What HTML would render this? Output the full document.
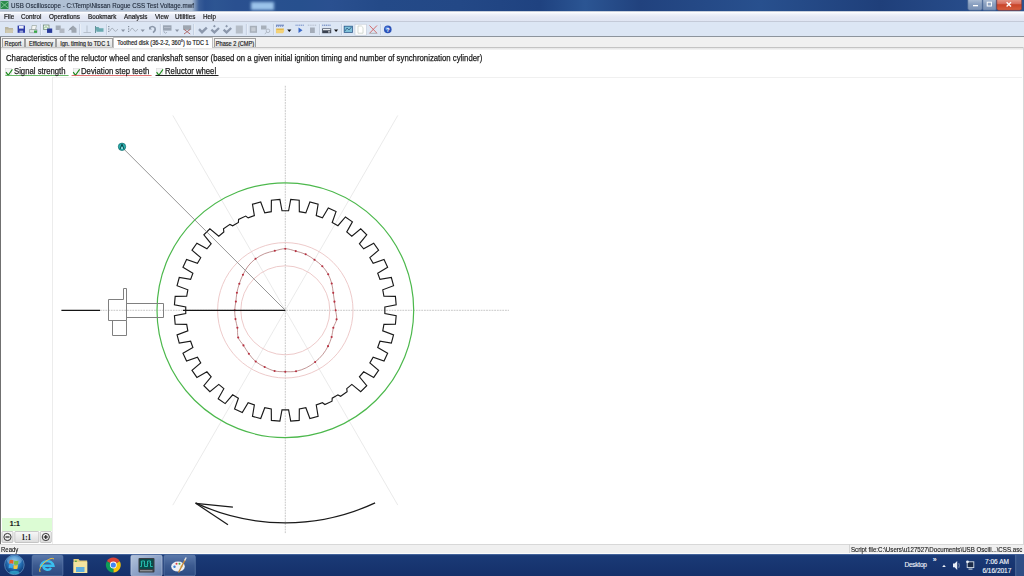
<!DOCTYPE html>
<html><head><meta charset="utf-8">
<style>
*{margin:0;padding:0;box-sizing:border-box}
html,body{width:1024px;height:576px;overflow:hidden;background:#fff;font-family:"Liberation Sans",sans-serif;color:#222}
.a,span{-webkit-text-stroke:0.15px currentColor}
.tab{-webkit-text-stroke:0.18px #1a1a1a}
.a{position:absolute}
#title{left:0;top:0;width:1024px;height:11px;background:linear-gradient(90deg,#b4c4d6 0px,#a8bad0 192px,#3a5e98 199px,#2a5090 205px,#2d5592 215px,#2a5090 235px,#27508e 300px,#2a5090 330px,#244a88 380px,#234886 460px,#1f4280 540px,#2b5593 585px,#21427e 640px,#28508e 760px,#1f3f7a 880px,#2a5190 1000px)}
#blob{left:251px;top:2px;width:23px;height:8px;background:#a8d0f4;filter:blur(1.4px);opacity:0.9}
#title span{position:absolute;left:11px;top:1.6px;font-size:6.9px;color:#1e2838;white-space:nowrap;-webkit-text-stroke:0.12px #1e2838;transform:scaleX(0.905);transform-origin:0 0}
#menu{left:0;top:11px;width:1024px;height:10.8px;background:linear-gradient(#a8b4c8 0,#fdfdff 1.4px,#eef1f9 3px,#e4e8f4 6px,#e0e5f2 100%);border-bottom:0.8px solid #c4cad8}
#menu span{position:absolute;top:2.4px;font-size:7px;color:#1a1a1a;-webkit-text-stroke:0.2px #1a1a1a;white-space:nowrap;transform:scaleX(0.9);transform-origin:0 0}
#tool{left:0;top:22px;width:1024px;height:15px;background:#dce6f4;border-bottom:1px solid #8d949c}
#tabs{left:0;top:37px;width:1024px;height:11px;background:#f0f0f0}
.tab{height:9.5px;background:linear-gradient(#f6f6f6,#dcdcdc);border:0.6px solid #a0a0a0;border-bottom:none;font-size:7px;color:#1a1a1a;white-space:nowrap;text-align:center;line-height:9px;overflow:visible}
.tab i{font-style:normal;position:absolute;left:50%;top:0;transform:translateX(-50%) scaleX(0.8);transform-origin:50% 50%}
.act{height:11px;background:#fff;border-color:#c0c0c0;line-height:9px;z-index:2}
#content{left:0;top:47.2px;width:1024px;height:497px;background:linear-gradient(#c4c4c4 0,#c4c4c4 1px,#e4e4e4 1px,#f0f0f0 2.4px,#fff 3.4px);border-right:1.2px solid #d8d8d8}
#lborder{left:0;top:36.5px;width:1.1px;height:507px;background:#707070}
#status{left:0;top:543.6px;width:1024px;height:11px;background:linear-gradient(#d8d8d8 0,#d8d8d8 0.8px,#f0f0f0 0.8px,#f0f0f0 9.4px,#fbfbfb 9.4px)}
#status span{position:absolute;top:1.2px;font-size:7.2px;color:#222;white-space:nowrap;transform:scaleX(0.83);transform-origin:0 0}
#task{left:0;top:554px;width:1024px;height:22px;background:linear-gradient(#1d3c78,#18346c 50%,#17336b)}
.cb{position:absolute;top:65.8px;color:#1a1a1a;-webkit-text-stroke:0.25px #1a1a1a;height:12px;font-size:9.1px;white-space:nowrap;transform:scaleX(0.85);transform-origin:0 0}
</style></head><body>
<div class="a" id="title"><div class="a" id="blob"></div><span>USB Oscilloscope - C:\Temp\Nissan Rogue CSS Test Voltage.mwf</span>
<svg class="a" style="left:0;top:0" width="9" height="10"><rect x="0.5" y="1" width="8" height="8" fill="#2c8a4c"/><path d="M1,2 L8,8 M8,2 L1,8" stroke="#8fd0a0" stroke-width="0.8"/></svg>
<svg class="a" style="left:966px;top:0" width="58" height="11">
<defs><linearGradient id="wb" x1="0" y1="0" x2="0" y2="1"><stop offset="0" stop-color="#b8c8dc"/><stop offset="0.5" stop-color="#8aa0c0"/><stop offset="1" stop-color="#7890b4"/></linearGradient>
<linearGradient id="wc" x1="0" y1="0" x2="0" y2="1"><stop offset="0" stop-color="#e8a898"/><stop offset="0.45" stop-color="#d87060"/><stop offset="0.55" stop-color="#c84428"/><stop offset="1" stop-color="#d86040"/></linearGradient></defs>
<rect x="1.8" y="-2" width="14.5" height="12.3" rx="2" fill="url(#wb)" stroke="#4a6490" stroke-width="0.6"/>
<rect x="16.8" y="-2" width="13.4" height="12.3" rx="1" fill="url(#wb)" stroke="#4a6490" stroke-width="0.6"/>
<rect x="30.8" y="-2" width="24.8" height="12.3" rx="2" fill="url(#wc)" stroke="#8a3a32" stroke-width="0.6"/>
<rect x="7" y="5" width="5" height="1.3" fill="#fff"/>
<rect x="21.2" y="2.2" width="4.2" height="3.8" fill="none" stroke="#fff" stroke-width="1"/>
<path d="M40.6,2.2 L45,6.4 M45,2.2 L40.6,6.4" stroke="#fff" stroke-width="1.4"/>
</svg>
</div>
<div class="a" id="menu">
<span style="left:3.6px">File</span><span style="left:20.6px">Control</span><span style="left:49.3px">Operations</span><span style="left:87.5px">Bookmark</span><span style="left:124px">Analysis</span><span style="left:154.6px">View</span><span style="left:175.2px">Utilities</span><span style="left:203.2px">Help</span>
</div>
<div class="a" id="tool"></div>
<svg class="a" style="left:0;top:0" width="400" height="40"><path d="M5,27 h3 l1,1 h4 v5 h-8z" fill="#b8b4a0"/><path d="M5.5,29.5 h8 l-1,3.5 h-7z" fill="#cfc9b0"/><rect x="17.6" y="25.6" width="7.4" height="7.2" fill="#2c3aa8"/><rect x="19" y="26" width="4.6" height="2.6" fill="#e8ecf8"/><rect x="19.5" y="30.6" width="3.6" height="2.2" fill="#9aa4d8"/><path d="M29.5,29.5 h7.5 v3.2 h-7.5z" fill="#dde2e6" stroke="#8c969c" stroke-width="0.6"/><path d="M32,25.5 l4.5,0 l-1,4 h-4z" fill="#f4f6f4" stroke="#7c8a80" stroke-width="0.5"/><rect x="34" y="30.5" width="3" height="2.3" fill="#3aa848"/><line x1="40.5" y1="24" x2="40.5" y2="35" stroke="#b6c2d4" stroke-width="0.8"/><line x1="41.3" y1="24" x2="41.3" y2="35" stroke="#f6f9fd" stroke-width="0.6"/><rect x="43.5" y="25" width="5.5" height="4.5" fill="#eaf2ea" stroke="#5a7a5a" stroke-width="0.6"/><rect x="47" y="28.5" width="5.2" height="4.4" fill="#2a3c9c"/><path d="M44,28.5 l2,-2 l2,2" stroke="#5aa85a" stroke-width="0.7" fill="none"/><rect x="55.7" y="25.5" width="5" height="4.5" fill="#a4acb6"/><rect x="59.5" y="28.5" width="5" height="4.5" fill="#b2b8c2"/><path d="M69,29 l4,-3.5 l3.5,3 v4.2 h-5 v-2.5 z" fill="#9ea6b0"/><path d="M68.8,30.5 l3,-3" stroke="#8890a0" stroke-width="1"/><line x1="79.6" y1="24" x2="79.6" y2="35" stroke="#b6c2d4" stroke-width="0.8"/><line x1="80.39999999999999" y1="24" x2="80.39999999999999" y2="35" stroke="#f6f9fd" stroke-width="0.6"/><path d="M87,25.5 v6.8 M83.5,32.5 h7.5" stroke="#a8b0bc" stroke-width="0.7" fill="none"/><path d="M95.5,27 h3 l1,1.2 h4 v3.6 h-7z" fill="#6aaab0"/><rect x="95" y="26" width="0.9" height="7" fill="#5a8890"/><line x1="106.8" y1="24" x2="106.8" y2="35" stroke="#b6c2d4" stroke-width="0.8"/><line x1="107.6" y1="24" x2="107.6" y2="35" stroke="#f6f9fd" stroke-width="0.6"/><path d="M108.8,26 v1.2 M108.8,28.4 v1.2 M108.8,30.8 v1.2" stroke="#707a88" stroke-width="1"/><path d="M110,31 q2,-5 4,-1 q1.5,3 3.8,-1" stroke="#a0a8b4" stroke-width="0.8" fill="none"/><path d="M121,29.5 h4.2 l-2.1,2.4z" fill="#8a94a4"/><path d="M128.7,26 v1.2 M128.7,28.4 v1.2 M128.7,30.8 v1.2" stroke="#707a88" stroke-width="1"/><path d="M130,31 q2,-5 4,-1 q1.5,3 3.8,-1" stroke="#a0a8b4" stroke-width="0.8" fill="none"/><path d="M140.6,29.5 h4.2 l-2.1,2.4z" fill="#8a94a4"/><path d="M149.5,28 q3,-3 5.5,0 q1,2.5 -2,4.6" stroke="#8c98aa" stroke-width="1.6" fill="none"/><path d="M149,26.5 v3 h3z" fill="#8c98aa"/><line x1="160.4" y1="24" x2="160.4" y2="35" stroke="#b6c2d4" stroke-width="0.8"/><line x1="161.20000000000002" y1="24" x2="161.20000000000002" y2="35" stroke="#f6f9fd" stroke-width="0.6"/><rect x="163" y="25.3" width="8.5" height="5.3" fill="#9aa4b2"/><rect x="164" y="27.2" width="6.5" height="0.7" fill="#c0c8d4"/><path d="M164,31 v1.2 l1.5,1 l1.5,-1" stroke="#8c96a4" stroke-width="0.6" fill="none"/><path d="M175,29.5 h4.2 l-2.1,2.4z" fill="#8a94a4"/><rect x="183" y="25.3" width="8.2" height="4.6" fill="#9ea6b0"/><path d="M184,34 l6.2,-4.6 M184,29.4 l6.2,4.6" stroke="#b07070" stroke-width="1" fill="none"/><line x1="193.8" y1="24" x2="193.8" y2="35" stroke="#b6c2d4" stroke-width="0.8"/><line x1="194.60000000000002" y1="24" x2="194.60000000000002" y2="35" stroke="#f6f9fd" stroke-width="0.6"/><path d="M199,29.2 l3,3 l4.8,-4.6" stroke="#8c98ac" stroke-width="2.4" fill="none"/><path d="M211.4,29.6 l3,2.8 l4.6,-4.4" stroke="#8c98ac" stroke-width="2.3" fill="none"/><path d="M214.4,24.8 l1.4,1.4 l-1.4,1.4 l-1.4,-1.4z" fill="#8c98ac"/><path d="M223.6,29.6 l3,2.8 l4.6,-4.4" stroke="#8c98ac" stroke-width="2.3" fill="none"/><path d="M226.6,24.8 l1.4,1.4 l-1.4,1.4 l-1.4,-1.4z" fill="#8c98ac"/><rect x="235.8" y="25.5" width="7" height="8" fill="#b6bec8"/><line x1="246.4" y1="24" x2="246.4" y2="35" stroke="#b6c2d4" stroke-width="0.8"/><line x1="247.20000000000002" y1="24" x2="247.20000000000002" y2="35" stroke="#f6f9fd" stroke-width="0.6"/><rect x="249.8" y="25.8" width="7.2" height="7" fill="#a8b0ba"/><rect x="251.3" y="27.3" width="4.2" height="4" fill="#c6ccd4"/><rect x="261" y="25.5" width="5.5" height="4" fill="#a8b0ba"/><circle cx="268" cy="30.8" r="1.8" fill="none" stroke="#a0a8b2" stroke-width="0.7"/><path d="M266.6,32.3 l-1.8,1.5" stroke="#a0a8b2" stroke-width="0.8"/><line x1="273.8" y1="24" x2="273.8" y2="35" stroke="#b6c2d4" stroke-width="0.8"/><line x1="274.6" y1="24" x2="274.6" y2="35" stroke="#f6f9fd" stroke-width="0.6"/><path d="M276,25.2 h8 M276,26.3 h1.2 m1,0 h1 m1,0 h1 m1,0 h1" stroke="#3050a0" stroke-width="0.7"/><path d="M276.2,28.5 h7.8 l-1,4.6 h-6.8z" fill="#e4b848"/><path d="M276.2,30 h8.2 l-1.3,3.2 h-6.9z" fill="#f4d276"/><path d="M287.2,29.5 h4.2 l-2.1,2.4z" fill="#111"/><path d="M295.5,25.2 h8.8" stroke="#5070b8" stroke-width="0.8" stroke-dasharray="1.2,0.6"/><path d="M298.5,27.5 l4,2.8 l-4,2.8z" fill="#3a68c8"/><path d="M307.8,25.2 h8.5" stroke="#a8b0c0" stroke-width="0.8" stroke-dasharray="1.2,0.6"/><rect x="310" y="27.5" width="4.8" height="5.5" fill="#a4acb8"/><line x1="319.5" y1="24" x2="319.5" y2="35" stroke="#b6c2d4" stroke-width="0.8"/><line x1="320.3" y1="24" x2="320.3" y2="35" stroke="#f6f9fd" stroke-width="0.6"/><path d="M322.2,25.2 h9" stroke="#3a5aa8" stroke-width="0.8" stroke-dasharray="1.2,0.6"/><rect x="322.2" y="28.4" width="9" height="4.8" fill="#3a4250"/><rect x="323" y="29" width="7.4" height="1.3" fill="#e8ecf0"/><rect x="328" y="31.3" width="2.2" height="1.2" fill="#d0d4da"/><path d="M334,29.5 h4.2 l-2.1,2.4z" fill="#111"/><line x1="341.6" y1="24" x2="341.6" y2="35" stroke="#b6c2d4" stroke-width="0.8"/><line x1="342.40000000000003" y1="24" x2="342.40000000000003" y2="35" stroke="#f6f9fd" stroke-width="0.6"/><rect x="343.8" y="25.8" width="9" height="7" fill="#2c5a8c"/><rect x="344.6" y="26.6" width="7.4" height="5.4" fill="#7ec0d8"/><path d="M345,31 l2,-3 l2,2 l2.5,-3" stroke="#1a3a6a" stroke-width="0.6" fill="none"/><rect x="355" y="24.2" width="11.3" height="11" fill="#fbfcfd" stroke="#c4ccd8" stroke-width="0.6"/><path d="M358,26 h3.4 l1.6,1.6 v5.6 h-5z" fill="#fff" stroke="#a8b4a8" stroke-width="0.5"/><path d="M369.5,25.5 l7.5,7.8 M377,25.5 l-7.5,7.8" stroke="#d06060" stroke-width="0.9"/><path d="M369.5,33.3 h7.5" stroke="#909090" stroke-width="0.6"/><line x1="380.8" y1="24" x2="380.8" y2="35" stroke="#b6c2d4" stroke-width="0.8"/><line x1="381.6" y1="24" x2="381.6" y2="35" stroke="#f6f9fd" stroke-width="0.6"/><circle cx="387.8" cy="29.4" r="3.8" fill="#2a52b8"/><circle cx="387.2" cy="28.6" r="2" fill="#5a86e0"/><text x="387.8" y="31.8" font-family="Liberation Sans" font-weight="bold" font-size="6" fill="#fff" text-anchor="middle">?</text></svg>
<div class="a" id="tabs"></div>
<div class="a tab" style="left:1.8px;top:38px;width:23.2px"><i>Report</i></div>
<div class="a tab" style="left:25.3px;top:38px;width:30.9px"><i>Efficiency</i></div>
<div class="a tab" style="left:56.4px;top:38px;width:56.3px"><i>Ign. timing to TDC 1</i></div>
<div class="a tab act" style="left:112.6px;top:37px;width:100.8px"><i>Toothed disk (36-2-2, 360°) to TDC 1</i></div>
<div class="a tab" style="left:213.6px;top:38.2px;width:42px"><i>Phase 2 (CMP)</i></div>
<div class="a" id="content"></div>
<div class="a" id="lborder"></div>
<div class="a" style="left:5.5px;top:52.5px;font-size:9.2px;color:#1a1a1a;white-space:nowrap;transform:scaleX(0.847);-webkit-text-stroke:0.25px #1a1a1a;transform-origin:0 0">Characteristics of the reluctor wheel and crankshaft sensor (based on a given initial ignition timing and number of synchronization cylinder)</div>

<svg class="a" style="left:0;top:64px" width="230" height="14">
<rect x="5.5" y="4.5" width="6" height="6" fill="#f4f4f4" stroke="#d8d8d8" stroke-width="0.6"/>
<rect x="73.5" y="4.5" width="6" height="6" fill="#f4f4f4" stroke="#d8d8d8" stroke-width="0.6"/>
<rect x="156.5" y="4.5" width="6" height="6" fill="#f4f4f4" stroke="#d8d8d8" stroke-width="0.6"/>
<path d="M6,8.2 L8.2,11.2 L12.4,5.4" fill="none" stroke="#1a8a1a" stroke-width="1.1"/>
<path d="M73.2,8.2 L75.4,11.2 L79.6,5.4" fill="none" stroke="#1a8a1a" stroke-width="1.1"/>
<path d="M156.6,8.2 L158.8,11.2 L163,5.4" fill="none" stroke="#1a8a1a" stroke-width="1.1"/>
<line x1="5.3" y1="11.5" x2="68.6" y2="11.5" stroke="#58b058" stroke-width="0.9"/>
<line x1="71.6" y1="11.5" x2="151.6" y2="11.5" stroke="#d86060" stroke-width="0.9"/>
<line x1="155.5" y1="11.5" x2="218.5" y2="11.5" stroke="#202020" stroke-width="1"/>
</svg>
<div class="cb" style="left:14.4px">Signal strength</div>
<div class="cb" style="left:81.2px">Deviation step teeth</div>
<div class="cb" style="left:164.6px">Reluctor wheel</div>

<div class="a" style="left:52px;top:76.6px;width:970px;height:0.8px;background:#f0f0f0"></div>
<div class="a" style="left:51.5px;top:77px;width:1px;height:467px;background:#ececec"></div>
<svg width="1024" height="576" viewBox="0 0 1024 576" style="position:absolute;left:0;top:0">
<g stroke="#e8e8e8" stroke-width="0.9" fill="none">
<line x1="285.3" y1="310.3" x2="397.80" y2="115.44"/>
<line x1="285.3" y1="310.3" x2="172.80" y2="115.44"/>
<line x1="285.3" y1="310.3" x2="172.80" y2="505.16"/>
<line x1="285.3" y1="310.3" x2="397.80" y2="505.16"/>
</g>
<g stroke="#b4b4b4" stroke-width="0.75" fill="none" stroke-dasharray="1.8,0.9">
<line x1="285.3" y1="85.8" x2="285.3" y2="533.5"/>
<line x1="100" y1="310.3" x2="509" y2="310.3"/>
</g>
<circle cx="285.3" cy="310.3" r="67.7" fill="none" stroke="#ebc4c4" stroke-width="0.9"/>
<circle cx="285.3" cy="310.3" r="44.5" fill="none" stroke="#ebc4c4" stroke-width="0.9"/>
<ellipse cx="285.35" cy="310.2" rx="128.35" ry="127.4" fill="none" stroke="#4cb84c" stroke-width="1.2"/>
<path d="M335.60,310.30 C335.24,307.35 334.84,304.54 334.44,301.63 C334.05,298.73 333.68,295.88 333.22,292.86 C332.77,289.83 332.56,286.59 331.72,283.50 C330.88,280.41 329.76,277.19 328.20,274.30 C326.63,271.42 324.61,268.61 322.32,266.18 C320.04,263.75 317.27,261.70 314.50,259.72 C311.73,257.74 308.81,255.73 305.68,254.29 C302.56,252.86 299.13,252.05 295.74,251.11 C292.34,250.18 288.79,248.75 285.30,248.70 C281.81,248.65 278.25,249.99 274.81,250.82 C271.37,251.64 267.89,252.31 264.68,253.64 C261.47,254.96 258.30,256.71 255.55,258.77 C252.80,260.84 250.25,263.36 248.15,266.02 C246.04,268.69 244.41,271.80 242.94,274.75 C241.47,277.71 240.32,280.76 239.31,283.75 C238.31,286.74 237.48,289.71 236.91,292.69 C236.33,295.66 236.23,298.65 235.86,301.58 C235.50,304.52 234.77,307.38 234.70,310.30 C234.63,313.22 235.02,316.18 235.47,319.09 C235.91,321.99 236.92,324.67 237.38,327.74 C237.83,330.81 237.17,334.56 238.19,337.50 C239.20,340.44 241.70,342.69 243.47,345.40 C245.25,348.10 246.82,351.04 248.85,353.73 C250.89,356.43 253.06,359.36 255.70,361.57 C258.34,363.77 261.53,365.40 264.68,366.96 C267.83,368.53 271.17,370.17 274.60,370.96 C278.04,371.75 281.73,371.65 285.30,371.70 C288.87,371.75 292.56,371.91 296.05,371.26 C299.54,370.61 303.05,369.35 306.23,367.81 C309.42,366.27 312.42,364.18 315.15,362.00 C317.88,359.82 320.43,357.37 322.58,354.73 C324.73,352.09 326.54,349.11 328.05,346.17 C329.55,343.22 330.75,340.12 331.63,337.05 C332.51,333.98 332.49,330.73 333.32,327.78 C334.15,324.83 336.23,322.26 336.61,319.35 C336.99,316.43 335.96,313.25 335.60,310.30" fill="none" stroke="#a86868" stroke-width="0.7"/>
<g fill="#b83040"><circle cx="335.60" cy="310.30" r="1.05"/><circle cx="334.44" cy="301.63" r="1.05"/><circle cx="333.22" cy="292.86" r="1.05"/><circle cx="331.72" cy="283.50" r="1.05"/><circle cx="328.20" cy="274.30" r="1.05"/><circle cx="322.32" cy="266.18" r="1.05"/><circle cx="314.50" cy="259.72" r="1.05"/><circle cx="305.68" cy="254.29" r="1.05"/><circle cx="295.74" cy="251.11" r="1.05"/><circle cx="285.30" cy="248.70" r="1.05"/><circle cx="274.81" cy="250.82" r="1.05"/><circle cx="255.55" cy="258.77" r="1.05"/><circle cx="242.94" cy="274.75" r="1.05"/><circle cx="239.31" cy="283.75" r="1.05"/><circle cx="236.91" cy="292.69" r="1.05"/><circle cx="235.86" cy="301.58" r="1.05"/><circle cx="234.70" cy="310.30" r="1.05"/><circle cx="235.47" cy="319.09" r="1.05"/><circle cx="237.38" cy="327.74" r="1.05"/><circle cx="238.19" cy="337.50" r="1.05"/><circle cx="243.47" cy="345.40" r="1.05"/><circle cx="248.85" cy="353.73" r="1.05"/><circle cx="255.70" cy="361.57" r="1.05"/><circle cx="264.68" cy="366.96" r="1.05"/><circle cx="274.60" cy="370.96" r="1.05"/><circle cx="285.30" cy="371.70" r="1.05"/><circle cx="296.05" cy="371.26" r="1.05"/><circle cx="315.15" cy="362.00" r="1.05"/><circle cx="328.05" cy="346.17" r="1.05"/><circle cx="331.63" cy="337.05" r="1.05"/><circle cx="333.32" cy="327.78" r="1.05"/><circle cx="336.61" cy="319.35" r="1.05"/></g>
<polygon points="384.85,307.00 396.17,304.88 395.42,296.39 383.91,296.27 382.76,289.76 393.54,285.71 391.34,277.48 379.97,279.36 377.71,273.15 387.63,267.29 384.03,259.56 373.16,263.39 369.86,257.67 378.60,250.17 373.71,243.19 363.68,248.84 359.43,243.78 366.74,234.88 360.72,228.86 351.82,236.17 346.76,231.92 352.41,221.89 345.43,217.00 337.93,225.74 332.21,222.44 336.04,211.57 328.31,207.97 322.45,217.89 316.24,215.63 318.12,204.26 309.89,202.06 305.84,212.84 299.33,211.69 299.21,200.18 290.72,199.43 288.60,210.75 282.00,210.75 279.88,199.43 271.39,200.18 271.27,211.69 264.76,212.84 260.71,202.06 252.48,204.26 254.36,215.63 248.15,217.89 245.70,216.09 238.58,219.40 238.39,222.44 232.67,225.74 229.94,224.39 223.51,228.89 223.84,231.92 218.78,236.17 209.88,228.86 203.86,234.88 211.17,243.78 206.92,248.84 196.89,243.19 192.00,250.17 200.74,257.67 197.44,263.39 186.57,259.56 182.97,267.29 192.89,273.15 190.63,279.36 179.26,277.48 177.06,285.71 187.84,289.76 186.69,296.27 175.18,296.39 174.43,304.88 185.75,307.00 185.75,313.60 174.43,315.72 175.18,324.21 186.69,324.33 187.84,330.84 177.06,334.89 179.26,343.12 190.63,341.24 192.89,347.45 182.97,353.31 186.57,361.04 197.44,357.21 200.74,362.93 192.00,370.43 196.89,377.41 206.92,371.76 211.17,376.82 203.86,385.72 209.88,391.74 218.78,384.43 223.84,388.68 218.19,398.71 225.17,403.60 232.67,394.86 238.39,398.16 234.56,409.03 242.29,412.63 248.15,402.71 254.36,404.97 252.48,416.34 260.71,418.54 264.76,407.76 271.27,408.91 271.39,420.42 279.88,421.17 282.00,409.85 288.60,409.85 290.72,421.17 299.21,420.42 299.33,408.91 305.84,407.76 309.89,418.54 318.12,416.34 316.24,404.97 322.45,402.71 324.90,404.51 332.02,401.20 332.21,398.16 337.93,394.86 340.66,396.21 347.09,391.71 346.76,388.68 351.82,384.43 360.72,391.74 366.74,385.72 359.43,376.82 363.68,371.76 373.71,377.41 378.60,370.43 369.86,362.93 373.16,357.21 384.03,361.04 387.63,353.31 377.71,347.45 379.97,341.24 391.34,343.12 393.54,334.89 382.76,330.84 383.91,324.33 395.42,324.21 396.17,315.72 384.85,313.60" fill="none" stroke="#1a1a1a" stroke-width="1.15" stroke-linejoin="miter"/>
<line x1="61.4" y1="310.3" x2="100" y2="310.3" stroke="#151515" stroke-width="1.3"/>
<line x1="183" y1="310.3" x2="285.3" y2="310.3" stroke="#151515" stroke-width="1.3"/>
<line x1="123.4" y1="148.6" x2="285.3" y2="310.3" stroke="#8a8a8a" stroke-width="0.9"/>
<g stroke="#808080" stroke-width="1" fill="none">
<path d="M108.5,299.5 H123.5 V288.5 H126.5 V320.5 H108.5 Z"/>
<path d="M112.5,320.5 V335.5 H126.5 V320.5"/>
<path d="M126.5,303.5 H163.5 V317.5 H126.5"/>
</g>
<circle cx="122" cy="146.8" r="3.7" fill="#2ab0b0" stroke="#106a6a" stroke-width="0.7"/>
<path d="M120,149.2 L122,144.2 L124,149.2" fill="none" stroke="#0a4a4c" stroke-width="1"/><path d="M121.3,149 L122,147 L122.7,149" fill="none" stroke="#c8f8f8" stroke-width="0.6"/>
<path d="M375.11,502.89 A212.5,212.5 0 0 1 195.49,502.89" fill="none" stroke="#1a1a1a" stroke-width="1.2"/>
<line x1="195.7" y1="503.3" x2="232.9" y2="507.2" stroke="#1a1a1a" stroke-width="1.2"/>
<line x1="195.7" y1="503.3" x2="228" y2="524.8" stroke="#1a1a1a" stroke-width="1.2"/>
</svg>
<div class="a" style="left:1.5px;top:518px;width:50px;height:12.5px;background:#dcfcd4"></div>
<div class="a" style="left:9.8px;top:519.6px;font-size:7px;font-weight:bold;color:#1a1a1a">1:1</div>

<svg class="a" style="left:0;top:530px" width="54" height="14">
<defs><linearGradient id="bg" x1="0" y1="0" x2="0" y2="1"><stop offset="0" stop-color="#f8f8f8"/><stop offset="1" stop-color="#dcdcdc"/></linearGradient></defs>
<rect x="2" y="1.5" width="11" height="11" rx="1" fill="url(#bg)" stroke="#a8a8a8" stroke-width="0.6"/>
<rect x="14.8" y="1.5" width="24" height="11" rx="1" fill="url(#bg)" stroke="#a8a8a8" stroke-width="0.6"/>
<rect x="40.3" y="1.5" width="11" height="11" rx="1" fill="url(#bg)" stroke="#a8a8a8" stroke-width="0.6"/>
<circle cx="7.5" cy="7" r="3.6" fill="none" stroke="#222" stroke-width="0.9"/><rect x="5.5" y="6.4" width="4" height="1.2" fill="#222"/>
<circle cx="45.8" cy="7" r="3.6" fill="none" stroke="#222" stroke-width="0.9"/><rect x="43.8" y="6.4" width="4" height="1.2" fill="#222"/><rect x="45.2" y="5" width="1.2" height="4" fill="#222"/>
<text x="26.4" y="9.8" font-family="Liberation Serif" font-weight="bold" font-size="7.2" text-anchor="middle" fill="#111">1:1</text>
</svg>

<div class="a" id="status"><div class="a" style="left:848.5px;top:0;width:0.8px;height:9px;background:#d4d4d4"></div><span style="left:1px">Ready</span><span style="left:850.6px;transform:scaleX(0.856)">Script file:C:\Users\u127527\Documents\USB Oscill...\CSS.asc</span></div>
<svg class="a" style="left:0;top:554.4px" width="1024" height="22"><defs>
<linearGradient id="tb" x1="0" y1="0" x2="0" y2="1"><stop offset="0" stop-color="#2a4a86"/><stop offset="0.08" stop-color="#1a3a76"/><stop offset="1" stop-color="#15306a"/></linearGradient>
<linearGradient id="btn" x1="0" y1="0" x2="0" y2="1"><stop offset="0" stop-color="#5a78aa"/><stop offset="0.5" stop-color="#3c5a90"/><stop offset="1" stop-color="#2c4a82"/></linearGradient>
<linearGradient id="btna" x1="0" y1="0" x2="1" y2="1"><stop offset="0" stop-color="#b4c4dc"/><stop offset="0.5" stop-color="#8ea4c8"/><stop offset="1" stop-color="#6a84b0"/></linearGradient>
<radialGradient id="orb" cx="0.5" cy="0.35" r="0.6"><stop offset="0" stop-color="#8ad0f0"/><stop offset="0.5" stop-color="#2a7ac0"/><stop offset="1" stop-color="#0c3a78"/></radialGradient>
</defs><rect x="0" y="0" width="1024" height="22" fill="url(#tb)"/><rect x="0" y="0" width="1024" height="0.8" fill="#4a6aa0"/><circle cx="14.4" cy="10.8" r="9.8" fill="url(#orb)" stroke="#6a9ac8" stroke-width="0.7"/><ellipse cx="14.4" cy="6.5" rx="7.5" ry="4.6" fill="#b8d8f0" opacity="0.35"/><ellipse cx="14.4" cy="18.5" rx="5" ry="1.8" fill="#40e0f8" opacity="0.5"/><path d="M9.6,6.2 q2,-1.2 4,0.2 l-0.4,3.6 q-2,-1.2 -4,-0.2z" fill="#e8602a"/><path d="M14.3,6.6 q2,1 4.2,-0.2 l-0.4,3.8 q-2,1 -4.2,0z" fill="#78c040"/><path d="M9,10.6 q2,-1.2 4,0.2 l-0.4,3.6 q-2,-1.2 -4,-0.2z" fill="#40a8e8"/><path d="M13.7,11 q2,1 4.2,-0.2 l-0.4,3.8 q-2,1 -4.2,0z" fill="#f8c838"/><rect x="32.2" y="1.3" width="30.7" height="20.5" rx="1.5" fill="url(#btn)" stroke="#6a86b4" stroke-width="0.6"/><path d="M41,13 a6.2,5.2 0 1 1 12.5,-1.2 h-10 a4,3.6 0 0 0 7.5,2" fill="none" stroke="#3ac0f0" stroke-width="2.4"/><path d="M40,18 q-2,-4 6,-11 q6,-4 8,-2" fill="none" stroke="#e8c040" stroke-width="1"/><path d="M73.5,5 h5 l1.2,1.5 h7.5 v12.5 h-13.7z" fill="#e8d080"/><rect x="73.5" y="8" width="13.7" height="11" fill="#f4e4a0"/><rect x="76" y="13" width="8.5" height="5" fill="#60b0e0"/><rect x="74.8" y="6.6" width="2" height="1.3" fill="#50a040"/><path d="M113.3,11 L106.89,7.30 A7.4,7.4 0 0 1 119.71,7.30 Z" fill="#db4437"/><path d="M113.3,11 L119.71,7.30 A7.4,7.4 0 0 1 113.30,18.40 Z" fill="#f4c20d"/><path d="M113.3,11 L113.30,18.40 A7.4,7.4 0 0 1 106.89,7.30 Z" fill="#0f9d58"/><circle cx="113.3" cy="11" r="3.4" fill="#fff"/><circle cx="113.3" cy="11" r="2.6" fill="#4285f4"/><rect x="130.9" y="1.3" width="31.2" height="20.5" rx="1.5" fill="url(#btna)" stroke="#c8d4e8" stroke-width="0.6"/><rect x="138.5" y="4" width="16" height="14.5" rx="1" fill="#3a3e44"/><rect x="139.6" y="5" width="13.8" height="10" fill="#0a4a4a"/><path d="M140.2,12.5 h1.3 v-5.5 h3 v5.5 h3 v-5.5 h3 v5.5 h2.2" fill="none" stroke="#28c8b8" stroke-width="0.9"/><path d="M140.2,8 q1.5,-1 2.5,1 t3,2 t3,-2 t3,1" fill="none" stroke="#1a9a98" stroke-width="0.5"/><rect x="140" y="16" width="12.5" height="1.4" fill="#8a8e94"/><rect x="164" y="1.3" width="31.3" height="20.5" rx="1.5" fill="url(#btn)" stroke="#6a86b4" stroke-width="0.6"/><ellipse cx="178" cy="12.6" rx="6.8" ry="5" fill="#eef0f4"/><circle cx="174.5" cy="12.8" r="1.2" fill="#3a80d8"/><circle cx="176.5" cy="9.8" r="1" fill="#e04040"/><circle cx="179.5" cy="9.8" r="1" fill="#40b040"/><circle cx="181.5" cy="12.5" r="1" fill="#f0c030"/><path d="M178.5,18.5 L185.5,5" stroke="#c88a3a" stroke-width="1.4"/><path d="M184.6,6.5 L186.2,3.5" stroke="#e0e4ea" stroke-width="1.4"/><text x="904.4" y="13.3" font-family="Liberation Sans" font-size="6.6" fill="#eef2f8" stroke="#eef2f8" stroke-width="0.12" textLength="22.6">Desktop</text><text x="932.8" y="8.2" font-family="Liberation Sans" font-weight="bold" font-size="7" fill="#f0f4fa">»</text><path d="M942.2,13 h3.6 l-1.8,-2.2z" fill="#f0f4fa"/><path d="M953,9.5 h1.6 l2.6,-2.6 v9 l-2.6,-2.6 h-1.6z" fill="#e8eef6"/><path d="M958.8,9.2 q1,2.3 0,4.6" stroke="#b4c0d4" stroke-width="0.7" fill="none"/><rect x="967.2" y="7.8" width="6.6" height="5.8" fill="#1a2a48" stroke="#d8e0ea" stroke-width="0.9"/><rect x="968.5" y="14.6" width="4" height="1" fill="#d8e0ea"/><circle cx="967.5" cy="7.8" r="1.4" fill="#e8eef6"/><text x="997" y="9.9" font-family="Liberation Sans" font-size="6.5" fill="#eef2f8" text-anchor="middle" stroke="#eef2f8" stroke-width="0.15">7:06 AM</text><text x="996.9" y="18.9" font-family="Liberation Sans" font-size="6.5" fill="#eef2f8" text-anchor="middle" stroke="#eef2f8" stroke-width="0.15">6/16/2017</text><rect x="1015.7" y="0.8" width="8.3" height="21.2" fill="#3a5a90" opacity="0.7"/><line x1="1015.7" y1="0.8" x2="1015.7" y2="22" stroke="#6a86b0" stroke-width="0.6"/></svg>
</body></html>
